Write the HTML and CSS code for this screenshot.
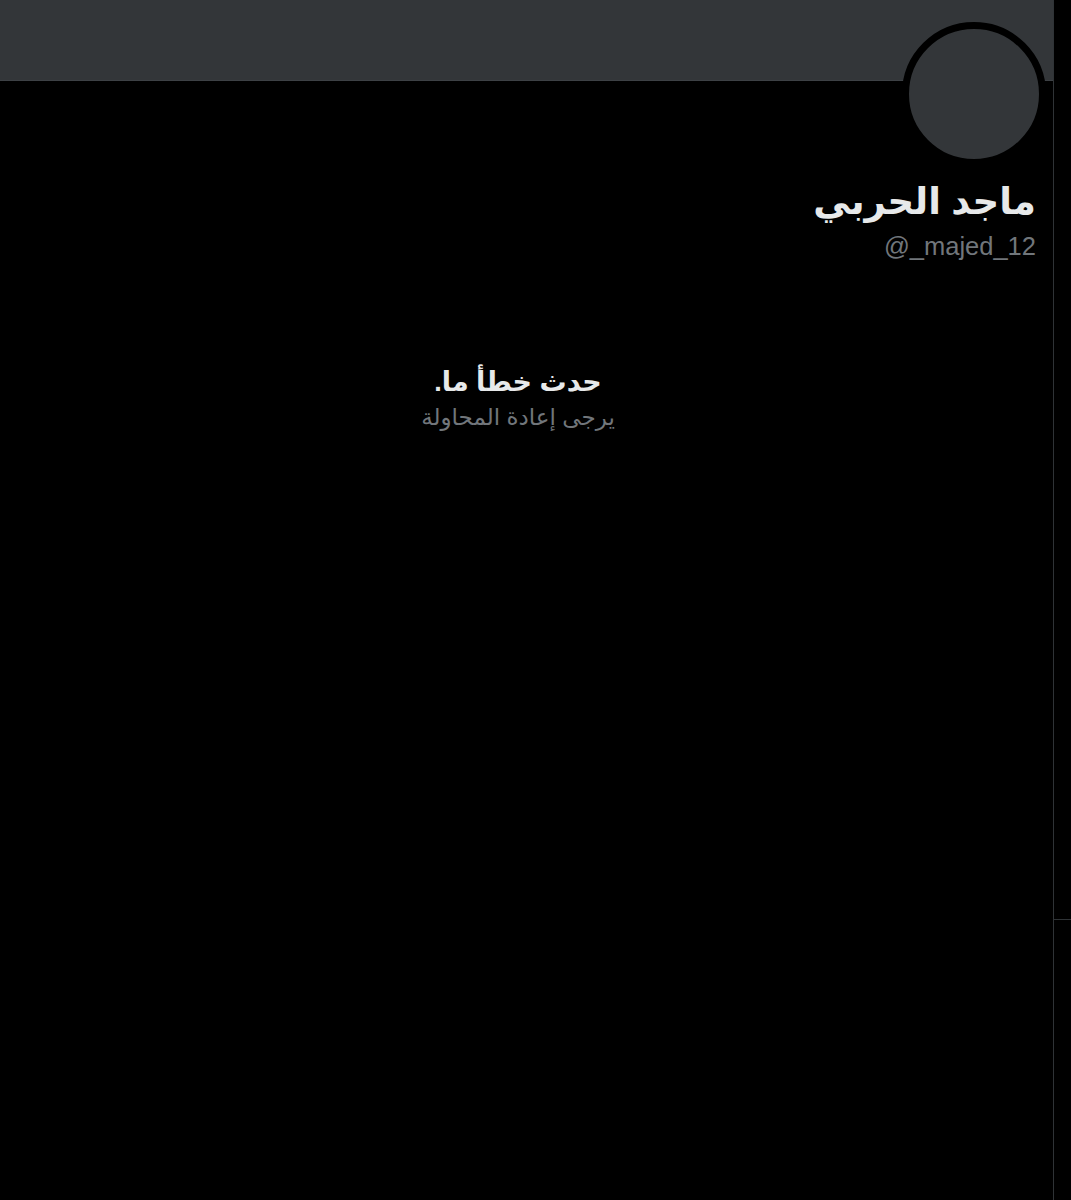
FILE: index.html
```html
<!DOCTYPE html>
<html lang="ar" dir="rtl">
<head>
    <meta charset="UTF-8">
    <title>ماجد الحربي</title>
    <link rel="stylesheet" href="styles.css">
</head>
<body>
    <div class="page">
        <div class="side">
            <div class="side-top"></div>
        </div>
        <div class="main">
            <div class="banner"></div>
            <div class="profile">
                <div class="avatar"></div>
                <div class="name">ماجد الحربي</div>
                <div class="handle" dir="ltr">@_majed_12</div>
            </div>
            <div class="error">
                <div class="error-title">حدث خطأ ما.</div>
                <div class="error-text">يرجى إعادة المحاولة</div>
            </div>
        </div>
    </div>
</body>
</html>
```

FILE: styles.css
```css
body {
    margin: 0;
    padding: 0;
    background-color: #000;
    color: #e7e9ea;
    font-family: "Liberation Sans", "DejaVu Sans", sans-serif;
}
.page {
    display: flex;
    min-height: 1200px;
}
.main {
    width: 1053px;
    border-right: 1px solid #2f3336;
}
.side {
    flex: 1;
}
.side-top {
    height: 919px;
    border-bottom: 1px solid #2f3336;
}
.banner {
    height: 80px;
    background-color: #333639;
    border-bottom: 1px solid #3d4145;
}
.profile {
    padding: 0 17px 0 0;
}
.avatar {
    width: 130px;
    height: 130px;
    border: 7px solid #000;
    border-radius: 50%;
    background-color: #333639;
    margin-top: -59px;
    margin-right: -10px;
}
.name {
    font-size: 37px;
    font-weight: bold;
    line-height: 40px;
    margin-top: 16px;
}
.handle {
    font-size: 25.5px;
    line-height: 40px;
    color: #71767b;
    text-align: right;
    margin-top: 4px;
}
.error {
    text-align: center;
    margin-top: 98px;
    padding-right: 17px;
}
.error-title {
    font-size: 27px;
    font-weight: bold;
    line-height: 36px;
}
.error-text {
    font-size: 23px;
    line-height: 34px;
    color: #71767b;
}
```
